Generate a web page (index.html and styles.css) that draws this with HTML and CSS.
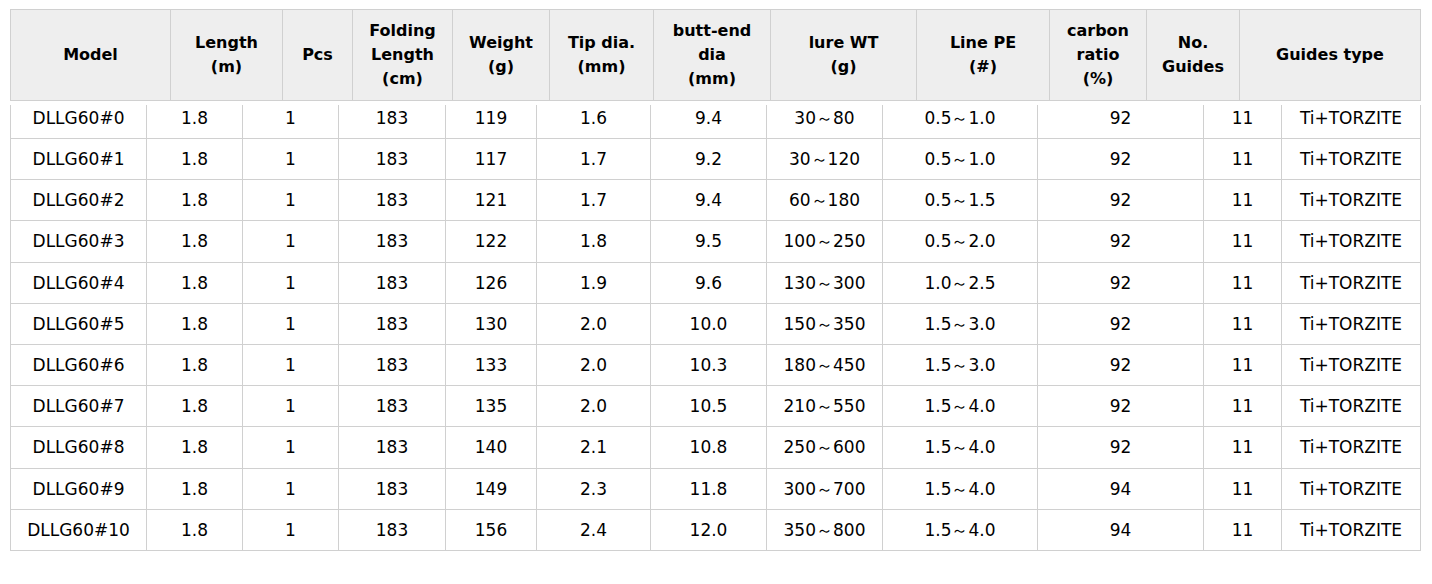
FILE: index.html
```html
<!DOCTYPE html>
<html lang="en">
<head>
<meta charset="utf-8">
<title>DLLG60 specifications</title>
<link rel="stylesheet" href="styles.css">
</head>
<body>
<div class="spec">
  <table class="spec-head">
    <colgroup>
      <col class="h1"><col class="h2"><col class="h3"><col class="h4"><col class="h5"><col class="h6">
      <col class="h7"><col class="h8"><col class="h9"><col class="h10"><col class="h11"><col class="h12">
    </colgroup>
    <tr>
      <th>Model</th>
      <th>Length<br>(m)</th>
      <th>Pcs</th>
      <th>Folding<br>Length<br>(cm)</th>
      <th>Weight<br>(g)</th>
      <th>Tip dia.<br>(mm)</th>
      <th>butt-end<br>dia<br>(mm)</th>
      <th>lure WT<br>(g)</th>
      <th>Line PE<br>(#)</th>
      <th>carbon<br>ratio<br>(%)</th>
      <th>No.<br>Guides</th>
      <th>Guides type</th>
    </tr>
  </table>
  <table class="spec-body">
    <colgroup>
      <col class="b1"><col class="b2"><col class="b3"><col class="b4"><col class="b5"><col class="b6">
      <col class="b7"><col class="b8"><col class="b9"><col class="b10"><col class="b11"><col class="b12">
    </colgroup>
    <tbody>
      <tr><td>DLLG60#0</td><td>1.8</td><td>1</td><td>183</td><td>119</td><td>1.6</td><td>9.4</td><td>30～80</td><td>0.5～1.0</td><td>92</td><td>11</td><td>Ti+TORZITE</td></tr>
      <tr><td>DLLG60#1</td><td>1.8</td><td>1</td><td>183</td><td>117</td><td>1.7</td><td>9.2</td><td>30～120</td><td>0.5～1.0</td><td>92</td><td>11</td><td>Ti+TORZITE</td></tr>
      <tr><td>DLLG60#2</td><td>1.8</td><td>1</td><td>183</td><td>121</td><td>1.7</td><td>9.4</td><td>60～180</td><td>0.5～1.5</td><td>92</td><td>11</td><td>Ti+TORZITE</td></tr>
      <tr><td>DLLG60#3</td><td>1.8</td><td>1</td><td>183</td><td>122</td><td>1.8</td><td>9.5</td><td>100～250</td><td>0.5～2.0</td><td>92</td><td>11</td><td>Ti+TORZITE</td></tr>
      <tr><td>DLLG60#4</td><td>1.8</td><td>1</td><td>183</td><td>126</td><td>1.9</td><td>9.6</td><td>130～300</td><td>1.0～2.5</td><td>92</td><td>11</td><td>Ti+TORZITE</td></tr>
      <tr><td>DLLG60#5</td><td>1.8</td><td>1</td><td>183</td><td>130</td><td>2.0</td><td>10.0</td><td>150～350</td><td>1.5～3.0</td><td>92</td><td>11</td><td>Ti+TORZITE</td></tr>
      <tr><td>DLLG60#6</td><td>1.8</td><td>1</td><td>183</td><td>133</td><td>2.0</td><td>10.3</td><td>180～450</td><td>1.5～3.0</td><td>92</td><td>11</td><td>Ti+TORZITE</td></tr>
      <tr><td>DLLG60#7</td><td>1.8</td><td>1</td><td>183</td><td>135</td><td>2.0</td><td>10.5</td><td>210～550</td><td>1.5～4.0</td><td>92</td><td>11</td><td>Ti+TORZITE</td></tr>
      <tr><td>DLLG60#8</td><td>1.8</td><td>1</td><td>183</td><td>140</td><td>2.1</td><td>10.8</td><td>250～600</td><td>1.5～4.0</td><td>92</td><td>11</td><td>Ti+TORZITE</td></tr>
      <tr><td>DLLG60#9</td><td>1.8</td><td>1</td><td>183</td><td>149</td><td>2.3</td><td>11.8</td><td>300～700</td><td>1.5～4.0</td><td>94</td><td>11</td><td>Ti+TORZITE</td></tr>
      <tr><td>DLLG60#10</td><td>1.8</td><td>1</td><td>183</td><td>156</td><td>2.4</td><td>12.0</td><td>350～800</td><td>1.5～4.0</td><td>94</td><td>11</td><td>Ti+TORZITE</td></tr>
    </tbody>
  </table>
</div>
</body>
</html>
```
FILE: styles.css
```css
html, body {
  margin: 0;
  padding: 0;
  background: #ffffff;
}

.spec {
  padding: 9px 0 0 10px;
  color: #000000;
  font-family: "DejaVu Sans", Verdana, sans-serif;
}

.spec table {
  width: 1411px;
  table-layout: fixed;
  border-collapse: separate;
  border-spacing: 0;
  border-left: 1px solid #d0d0d0;
}

.spec th,
.spec td {
  box-sizing: border-box;
  padding: 0;
  text-align: center;
  vertical-align: middle;
  border-right: 1px solid #d0d0d0;
  border-bottom: 1px solid #d0d0d0;
  white-space: nowrap;
}

/* header */
.spec-head {
  border-top: 1px solid #d0d0d0;
  background: #eeeeee;
}

.spec-head th {
  height: 91px;
  font-size: 16px;
  font-weight: bold;
  line-height: 24px;
}

.h1 { width: 160px; }
.h2 { width: 112px; }
.h3 { width: 70px; }
.h4 { width: 100px; }
.h5 { width: 97px; }
.h6 { width: 104px; }
.h7 { width: 117px; }
.h8 { width: 146px; }
.h9 { width: 133px; }
.h10 { width: 97px; }
.h11 { width: 93px; }
.h12 { width: 181px; }

/* body */
.spec-body {
  margin-top: 4px;
}

.spec-body td {
  height: 41.2px;
  font-size: 17px;
  line-height: 20px;
}

.spec-body tr:first-child td {
  height: 34px;
  padding-bottom: 8px;
}

.b1 { width: 136px; }
.b2 { width: 96px; }
.b3 { width: 96px; }
.b4 { width: 107px; }
.b5 { width: 91px; }
.b6 { width: 114px; }
.b7 { width: 116px; }
.b8 { width: 116px; }
.b9 { width: 155px; }
.b10 { width: 166px; }
.b11 { width: 78px; }
.b12 { width: 139px; }
```
